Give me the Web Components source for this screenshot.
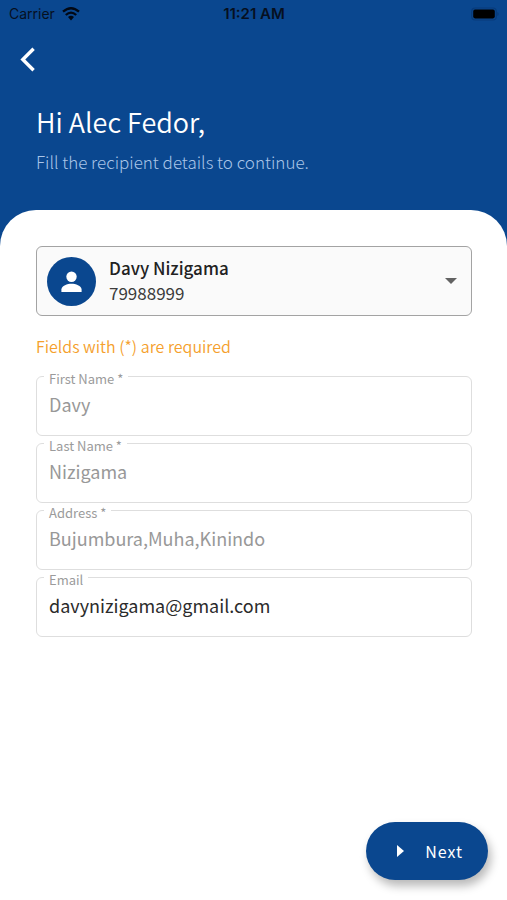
<!DOCTYPE html>
<html lang="en">
<head>
<meta charset="utf-8">
<meta name="viewport" content="width=device-width, initial-scale=1">
<title>Recipient details</title>
<style>
  html, body { margin: 0; }
  body {
    --brand: #0a478f;
    font-family: "Noto Sans CJK SC", "Noto Sans", sans-serif;
    background: #fff;
    color: #2b2b2b;
  }
</style>
</head>
<body>
<recipient-page>
  <status-bar slot="header" carrier="Carrier" time="11:21 AM"></status-bar>
  <page-intro slot="header">
    <span slot="title">Hi Alec Fedor,</span>
    <span slot="text">Fill the recipient details to continue.</span>
  </page-intro>
  <recipient-picker name="Davy Nizigama" phone="79988999"></recipient-picker>
  <required-note>Fields with (*) are required</required-note>
  <form-fields>
    <outlined-field label="First Name *" value="Davy" disabled></outlined-field>
    <outlined-field label="Last Name *" value="Nizigama" disabled></outlined-field>
    <outlined-field label="Address *" value="Bujumbura,Muha,Kinindo" disabled></outlined-field>
    <outlined-field label="Email" type="email" value="davynizigama@gmail.com"></outlined-field>
  </form-fields>
  <next-button slot="action">Next</next-button>
</recipient-page>

<script>
  const define = (name, render, after) => customElements.define(name, class extends HTMLElement {
    connectedCallback() {
      if (this.shadowRoot) return;
      this.attachShadow({ mode: "open" }).innerHTML = render(this);
      if (after) after(this, this.shadowRoot);
    }
  });

  define("recipient-page", () => `
    <style>
      :host { display: flex; flex-direction: column; min-height: 100vh; background: var(--brand); }
      main {
        flex: 1; display: flex; flex-direction: column; box-sizing: border-box;
        background: #fff; border-radius: 36px 36px 0 0; padding: 36px 35px 20px 36px;
      }
      footer { margin: auto -16px 0 0; display: flex; justify-content: flex-end; }
    </style>
    <header><slot name="header"></slot></header>
    <main><slot></slot><footer><slot name="action"></slot></footer></main>`);

  define("status-bar", el => `
    <style>
      :host {
        display: grid; grid-template-columns: 1fr auto 1fr; align-items: center;
        height: 28px; padding: 0 8px 0 9px; color: #06101f;
        font: 14px/20px Inter, "Liberation Sans", sans-serif;
      }
      .left { display: flex; align-items: center; gap: 7px; }
      .time { font-size: 15px; font-weight: 600; }
      .battery { justify-self: end; }
      svg { display: block; }
    </style>
    <div class="left"><span>${el.getAttribute("carrier")}</span>
      <svg width="18" height="14" viewBox="0 0 18 14" aria-label="Wi-Fi">
        <g fill="none" stroke="#020814" stroke-width="2.3">
          <path d="M1 4.7Q9-2.3 17 4.7"/><path d="M3.8 8Q9 3.3 14.2 8"/>
        </g>
        <path d="M6 10.1Q9 7.6 12 10.1L9 13.4Z" fill="#020814"/>
      </svg>
    </div>
    <span class="time">${el.getAttribute("time")}</span>
    <svg class="battery" width="28" height="14" viewBox="0 0 28 14" aria-label="Battery">
      <rect x=".7" y="1" width="24.6" height="12" rx="3.5" fill="none" stroke="#083b7a" stroke-width="1.2"/>
      <rect x="2.2" y="2.6" width="21.6" height="8.8" rx="1.8" fill="#000"/>
      <path d="M26.3 5v4q1.4-.7 1.4-2T26.3 5Z" fill="#083b7a"/>
    </svg>`);

  define("page-intro", () => `
    <style>
      :host { display: block; padding: 12px 36px 36px 8px; color: #fff; }
      button { display: block; width: 40px; height: 40px; padding: 0; border: 0; background: none; color: inherit; cursor: pointer; }
      svg { display: block; }
      h1 { margin: 22px 0 0 28px; font-size: 27px; line-height: 40px; font-weight: 350; }
      p { margin: 8px 0 0 28px; font-size: 17px; line-height: 24px; font-weight: 300; color: #a9c5e8; }
    </style>
    <button type="button" aria-label="Back">
      <svg width="40" height="40" viewBox="0 0 40 40"><path d="M25.6 8.7 14.8 19.5 25.6 30.3" fill="none" stroke="#fff" stroke-width="3.4"/></svg>
    </button>
    <h1><slot name="title"></slot></h1>
    <p><slot name="text"></slot></p>`);

  define("recipient-picker", el => `
    <style>
      :host { display: grid; grid-template-columns: 73px 1fr 42px; grid-template-rows: 35px 35px; }
      select {
        grid-area: 1 / 1 / 3 / 4; width: 100%; height: 70px; box-sizing: border-box; margin: 0;
        padding: 8px 42px 34px 72px; appearance: none; border: 1px solid #a3a3a3; border-radius: 6px;
        background: #fafafa; color: #222; font: 500 17px/26px "Noto Sans CJK SC", sans-serif; cursor: pointer;
      }
      .avatar, .phone, .caret { pointer-events: none; z-index: 1; }
      .avatar { grid-area: 1 / 1 / 3 / 2; align-self: center; margin-left: 11px; }
      .phone { grid-area: 2 / 2; font-size: 17px; line-height: 24px; color: #3c3c3c; }
      .caret { grid-area: 1 / 3 / 3 / 4; align-self: center; justify-self: center; }
    </style>
    <select id="recipient" aria-label="Recipient"><option>${el.getAttribute("name")}</option></select>
    <svg class="avatar" width="49" height="49" viewBox="0 0 49 49" aria-hidden="true">
      <circle cx="24.5" cy="24.5" r="24.5" fill="#0a478f"/>
      <circle cx="24.5" cy="19.7" r="5.2" fill="#fff"/>
      <path d="M14.4 35v-2.5c0-3.7 6.2-5.7 10.1-5.7s10.1 2 10.1 5.7V35Z" fill="#fff"/>
    </svg>
    <output class="phone" for="recipient">${el.getAttribute("phone")}</output>
    <svg class="caret" width="12" height="6" viewBox="0 0 12 6" aria-hidden="true"><path d="M0 0h12L6 6Z" fill="#626262"/></svg>`);

  define("required-note", () => `
    <style>:host { display: block; margin-top: 18px; font-size: 16px; line-height: 24px; font-weight: 350; color: #f5a02c; }</style>
    <slot></slot>`);

  define("form-fields", () => `
    <style>:host { display: flex; flex-direction: column; gap: 7px; margin-top: 18px; }</style>
    <slot></slot>`);

  define("outlined-field", () => `
    <style>
      :host { display: block; }
      /* The legend straddles the top border, so the box is pulled up by half of its height. */
      fieldset { margin: -12px 0 0; padding: 0 12px 15px 7px; min-width: 0; border: 1px solid #dedede; border-radius: 6px; }
      legend { padding: 6px 5px 0; font-size: 13px; line-height: 18px; color: #9b9b9b; }
      label { display: block; }
      input {
        display: block; width: 100%; height: 32px; box-sizing: border-box; padding: 0 0 0 5px; margin: 0; border: 0;
        outline: 0; background: none; color: #2b2b2b; font: 18px/32px "Noto Sans CJK SC", sans-serif;
      }
      input:disabled { color: #989898; }
    </style>
    <fieldset><legend><label for="field"></label></legend><input id="field"></fieldset>`,
    (el, root) => {
      const input = root.querySelector("input");
      root.querySelector("label").textContent = el.getAttribute("label");
      input.type = el.getAttribute("type") || "text";
      input.value = el.getAttribute("value");
      input.disabled = el.hasAttribute("disabled");
    });

  define("next-button", () => `
    <style>
      :host { display: block; }
      button {
        display: flex; align-items: center; gap: 20px; height: 58px; padding: 0 25px 0 31px; border: 0; border-radius: 29px;
        background: var(--brand); color: #fff; font: 16px/24px "Noto Sans CJK SC", sans-serif; letter-spacing: 1px;
        box-shadow: 3px 6px 10px rgba(0,0,0,.28); cursor: pointer;
      }
    </style>
    <button type="button">
      <svg width="8" height="12" viewBox="0 0 8 12" aria-hidden="true"><path d="M0 0v12l7-6Z" fill="#fff"/></svg>
      <slot></slot>
    </button>`);
</script>
</body>
</html>
